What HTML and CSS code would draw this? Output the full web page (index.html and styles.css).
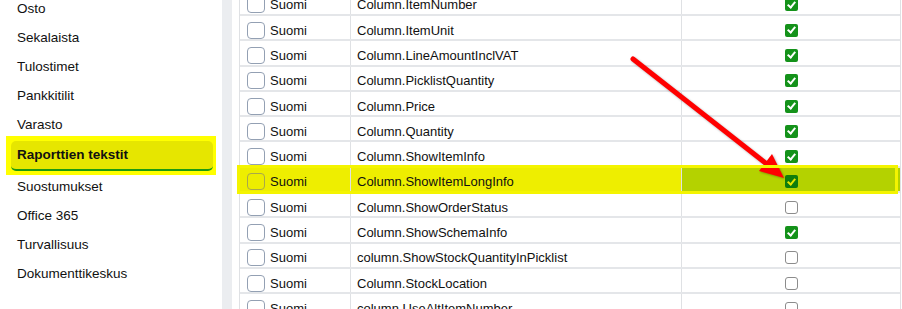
FILE: index.html
```html
<!DOCTYPE html>
<html lang="fi">
<head>
    <meta charset="UTF-8">
    <meta name="viewport" content="width=device-width, initial-scale=1.0">
    <title>Raporttien tekstit</title>
    <link rel="stylesheet" href="styles.css">
</head>
<body>
<div class="page">
    <!-- Settings menu -->
    <nav class="sidebar">
        <ul class="menu">
            <li>Osto</li>
            <li>Sekalaista</li>
            <li>Tulostimet</li>
            <li>Pankkitilit</li>
            <li>Varasto</li>
            <li class="active">Raporttien tekstit</li>
            <li>Suostumukset</li>
            <li>Office 365</li>
            <li>Turvallisuus</li>
            <li>Dokumenttikeskus</li>
        </ul>
    </nav>

    <div class="gutter"></div>

    <!-- Report texts -->
    <main class="content">
        <div class="grid">
            <div class="row"><div class="cell sel"><span class="box"></span>Suomi</div><div class="cell key">Column.ItemNumber</div><div class="cell flag"><span class="check on"></span></div></div>
            <div class="row"><div class="cell sel"><span class="box"></span>Suomi</div><div class="cell key">Column.ItemUnit</div><div class="cell flag"><span class="check on"></span></div></div>
            <div class="row"><div class="cell sel"><span class="box"></span>Suomi</div><div class="cell key">Column.LineAmountInclVAT</div><div class="cell flag"><span class="check on"></span></div></div>
            <div class="row"><div class="cell sel"><span class="box"></span>Suomi</div><div class="cell key">Column.PicklistQuantity</div><div class="cell flag"><span class="check on"></span></div></div>
            <div class="row"><div class="cell sel"><span class="box"></span>Suomi</div><div class="cell key">Column.Price</div><div class="cell flag"><span class="check on"></span></div></div>
            <div class="row"><div class="cell sel"><span class="box"></span>Suomi</div><div class="cell key">Column.Quantity</div><div class="cell flag"><span class="check on"></span></div></div>
            <div class="row"><div class="cell sel"><span class="box"></span>Suomi</div><div class="cell key">Column.ShowItemInfo</div><div class="cell flag"><span class="check on"></span></div></div>
            <div class="row marked"><div class="cell sel"><span class="box"></span>Suomi</div><div class="cell key">Column.ShowItemLongInfo</div><div class="cell flag"><span class="check on"></span></div></div>
            <div class="row"><div class="cell sel"><span class="box"></span>Suomi</div><div class="cell key">Column.ShowOrderStatus</div><div class="cell flag"><span class="check"></span></div></div>
            <div class="row"><div class="cell sel"><span class="box"></span>Suomi</div><div class="cell key">Column.ShowSchemaInfo</div><div class="cell flag"><span class="check on"></span></div></div>
            <div class="row"><div class="cell sel"><span class="box"></span>Suomi</div><div class="cell key">column.ShowStockQuantityInPicklist</div><div class="cell flag"><span class="check"></span></div></div>
            <div class="row"><div class="cell sel"><span class="box"></span>Suomi</div><div class="cell key">Column.StockLocation</div><div class="cell flag"><span class="check"></span></div></div>
            <div class="row"><div class="cell sel"><span class="box"></span>Suomi</div><div class="cell key">column.UseAltItemNumber</div><div class="cell flag"><span class="check"></span></div></div>
        </div>
    </main>

    <!-- Annotation arrow -->
    <svg class="arrow" width="902" height="309" viewBox="0 0 902 309">
        <line x1="633" y1="59" x2="768" y2="165" stroke="#ff0000" stroke-width="5" stroke-linecap="round"/>
        <polygon points="784,178 759,171 772,154" fill="#ff0000"/>
    </svg>
</div>
</body>
</html>
```

FILE: styles.css
```css
body {
    margin: 0;
    font-family: "Liberation Sans", Arial, sans-serif;
    color: #111;
    background: #fff;
    overflow: hidden;
}

.page {
    position: relative;
    display: flex;
    height: 309px;
    overflow: hidden;
}

/* Sidebar menu */
.sidebar {
    position: relative;
    z-index: 0;
    width: 222px;
    flex-shrink: 0;
    background: #fff;
}

.menu {
    list-style: none;
    margin: -6px 0 0;
    padding: 0;
}

.menu li {
    padding-left: 17px;
    line-height: 29px;
    font-size: 13.5px;
}

.menu li.active {
    position: relative;
    margin: 2px 9px 0.5px 11px;
    padding-left: 6px;
    height: 30px;
    box-sizing: border-box;
    line-height: 28px;
    font-weight: bold;
    background: #e6e600;
    border-bottom: 2px solid #1d9a12;
    border-radius: 5px;
}

/* yellow annotation behind the active item */
.menu li.active::before {
    content: "";
    position: absolute;
    top: -5px;
    right: -3px;
    bottom: -6px;
    left: -5px;
    background: #ffff00;
    z-index: -1;
}

.gutter {
    width: 10px;
    flex-shrink: 0;
    background: #ebedf0;
}

/* Texts grid */
.content {
    flex: 1;
    padding-left: 7px;
}

.grid {
    width: 660px;
    margin-top: -9.3px;
    border-left: 1px solid #dfe1e4;
    border-right: 1px solid #dfe1e4;
    font-size: 13px;
}

.row {
    position: relative;
    display: grid;
    grid-template-columns: 111px 331px 218px;
    height: 25.3px;
    box-sizing: border-box;
    border-bottom: 2px solid #e4e6e9;
}

.cell {
    display: flex;
    align-items: center;
    padding-top: 5px;
    box-sizing: border-box;
    white-space: nowrap;
}

.sel {
    padding-left: 7px;
    gap: 5px;
    border-right: 1px solid #dfe1e4;
}

.key {
    padding-left: 6px;
    border-right: 1px solid #dfe1e4;
}

.flag {
    justify-content: center;
}

.box {
    width: 18px;
    height: 17px;
    box-sizing: border-box;
    border: 1px solid #93a0b3;
    border-radius: 4px;
    background: #fff;
}

.check {
    position: relative;
    width: 13px;
    height: 13px;
    box-sizing: border-box;
    border: 1px solid #8c8c8c;
    border-radius: 3px;
    background: #fff;
}

.check.on {
    border: none;
    border-radius: 2px;
    background: #14921a;
}

.check.on::after {
    content: "";
    position: absolute;
    left: 4px;
    top: 1.5px;
    width: 3px;
    height: 6px;
    border-right: 2px solid #fff;
    border-bottom: 2px solid #fff;
    transform: rotate(40deg);
}

/* highlighted row */
.row.marked .sel,
.row.marked .key {
    background: #eeee00;
}

.row.marked .flag {
    background: #b4d200;
}

.row.marked .box {
    background: #eded00;
    border-color: #a8a84c;
}

.row.marked .check.on {
    background: #0f7d0c;
}

.row.marked .check.on::after {
    border-color: #e6e600;
}

.row.marked::before {
    content: "";
    position: absolute;
    top: -3px;
    right: 2px;
    bottom: -3.4px;
    left: -3px;
    border: 3px solid #f4f400;
    z-index: 1;
}

.arrow {
    position: absolute;
    top: 0;
    left: 0;
    pointer-events: none;
    filter: drop-shadow(1px 1px 1px rgba(0, 0, 0, 0.3));
}
```
